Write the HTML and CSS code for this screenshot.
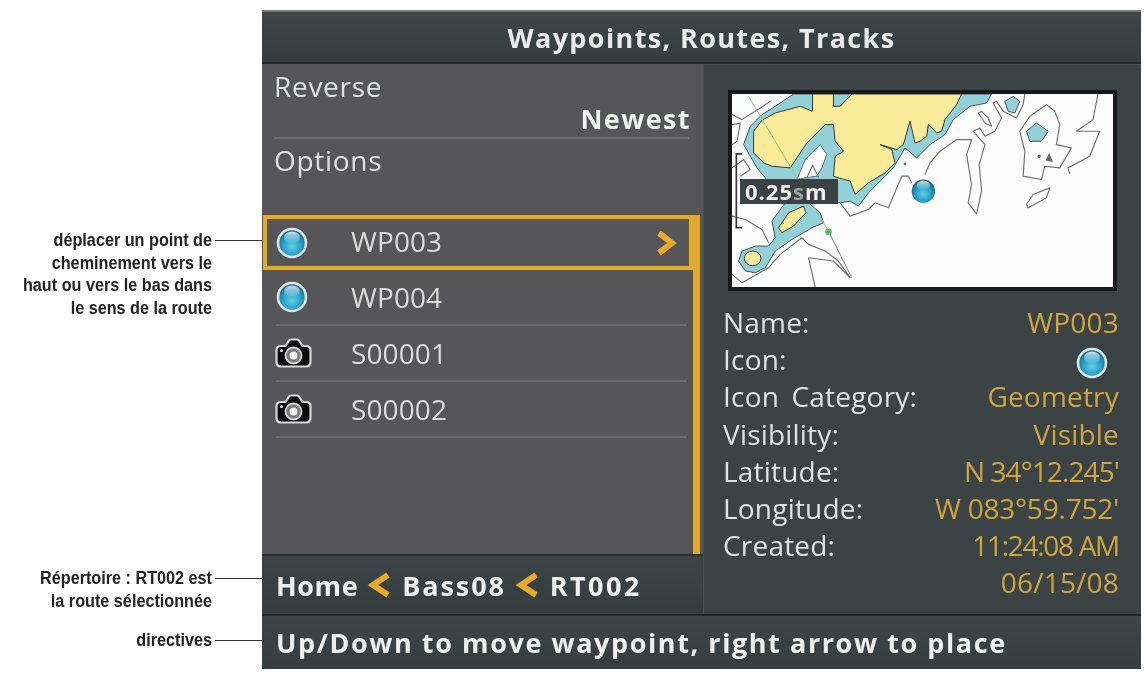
FILE: index.html
```html
<!DOCTYPE html>
<html lang="en">
<head>
<meta charset="utf-8">
<title>Waypoints, Routes, Tracks</title>
<link rel="stylesheet" href="styles.css">
</head>
<body>
<svg class="defs" width="0" height="0" aria-hidden="true">
  <defs>
    <radialGradient id="orb" cx="50%" cy="62%" r="60%">
      <stop offset="0" stop-color="#5fd0e8"/>
      <stop offset="0.55" stop-color="#2a9ec4"/>
      <stop offset="1" stop-color="#10607f"/>
    </radialGradient>
    <linearGradient id="gloss" x1="0" y1="0" x2="0" y2="1">
      <stop offset="0" stop-color="#dfeef2" stop-opacity=".9"/>
      <stop offset="1" stop-color="#dfeef2" stop-opacity="0"/>
    </linearGradient>
    <symbol id="orb-icon" viewBox="0 0 32 32">
      <circle cx="16" cy="16" r="14" fill="url(#orb)" stroke="#dce8ea" stroke-width="2.6"/>
      <ellipse cx="16" cy="10.5" rx="8" ry="6" fill="url(#gloss)"/>
    </symbol>
    <symbol id="camera-icon" viewBox="0 0 37 30">
      <path d="M6 8h4.500l3.500-5.500q.5-1 2-1h6q1.500 0 2 1L27.500 8H31q4.500 0 4.500 4v12q0 4.500-4.500 4.500H6q-4.500 0-4.500-4.500V12Q1.500 8 6 8z" fill="#0c0c0d" stroke="#d8d8d8" stroke-width="2.200" stroke-linejoin="round"/>
      <circle cx="18.500" cy="17.500" r="8" fill="#77777a" stroke="#d8d8d8" stroke-width="1.800"/>
      <circle cx="18.500" cy="17.500" r="4" fill="#f0f0f0"/>
      <circle cx="6.500" cy="12.500" r="1.500" fill="#e6e6e6"/>
    </symbol>
    <symbol id="chev-left" viewBox="0 0 28 28">
      <path d="M22 4 7 14l15 10" fill="none" stroke="#e6a92a" stroke-width="6"/>
    </symbol>
  </defs>
</svg>
<main class="page">
  <aside class="notes">
    <div class="note note-move">
      <p class="note-text">déplacer un point de<br>cheminement vers le<br>haut ou vers le bas dans<br>le sens de la route</p>
      <span class="leader"></span>
    </div>
    <div class="note note-dir">
      <p class="note-text">Répertoire : RT002 est<br>la route sélectionnée</p>
      <span class="leader"></span>
    </div>
    <div class="note note-hint">
      <p class="note-text">directives</p>
      <span class="leader"></span>
    </div>
  </aside>

  <section class="device">
    <header class="title">Waypoints, Routes, Tracks</header>
    <div class="middle">
      <div class="left">
        <div class="menu">
          <div class="menu-item menu-reverse">
            <span class="menu-label">Reverse</span>
            <span class="menu-value">Newest</span>
          </div>
          <div class="menu-item menu-options">
            <span class="menu-label">Options</span>
          </div>
        </div>
        <div class="list-wrap">
          <ul class="list">
            <li class="row row-selected">
              <svg class="row-icon orb"><use href="#orb-icon"/></svg>
              <span class="row-name">WP003</span>
              <svg class="row-chev" viewBox="0 0 24 28"><path d="M5 4 18 14 5 24" fill="none" stroke="#e6a92a" stroke-width="6"/></svg>
            </li>
            <li class="row">
              <svg class="row-icon orb"><use href="#orb-icon"/></svg>
              <span class="row-name">WP004</span>
            </li>
            <li class="row">
              <svg class="row-icon cam"><use href="#camera-icon"/></svg>
              <span class="row-name">S00001</span>
            </li>
            <li class="row">
              <svg class="row-icon cam"><use href="#camera-icon"/></svg>
              <span class="row-name">S00002</span>
            </li>
          </ul>
          <div class="scrollbar"></div>
        </div>
        <nav class="crumb">
          <span class="crumb-home">Home</span>
          <svg class="crumb-chev"><use href="#chev-left"/></svg>
          <span class="crumb-group">Bass08</span>
          <svg class="crumb-chev"><use href="#chev-left"/></svg>
          <span class="crumb-route">RT002</span>
        </nav>
      </div>

      <div class="right">
        <div class="map">
          <svg class="map-svg" viewBox="20 18 1145 580" preserveAspectRatio="none">
            <rect x="20" y="18" width="1145" height="580" fill="#fbfcfb"/>
            <path class="teal" d="M205 18 150 55 110 80 75 115 55 170 75 205 95 240 120 270 180 345 140 400 150 450 130 475 90 475 50 490 40 520 60 550 90 555 120 540 150 490 200 455 260 420 295 405 285 375 250 345 345 345 375 340 400 355 430 315 480 265 505 240 540 180 575 210 615 170 660 140 685 95 735 55 785 45 800 18z"/>
            <path class="patch" d="M285 170 305 200 290 240 275 265 240 270 215 275 240 215z"/>
            <path class="land" d="M85 130 110 97 150 75 225 55 262 70 262 18 325 18 325 55 345 55 380 18 710 18 695 50 660 95 650 130 635 135 610 110 605 145 585 160 570 165 555 100 535 170 515 185 465 170 500 185 510 225 480 255 430 285 390 320 375 280 340 270 325 265 330 205 355 190 330 160 325 110 300 110 245 165 195 240 140 235 115 225 85 195z"/>
            <path class="land" d="M160 420 190 375 235 355 242 375 205 415 170 435z"/>
            <ellipse class="land" cx="82" cy="512" rx="25" ry="22"/>
            <path class="teal" d="M840 40 865 25 885 40 870 75 850 70z"/>
            <path class="teal" d="M905 130 935 105 970 130 950 160 915 160z"/>
            <g class="contours">
              <path d="M600 260 615 225 645 190 695 155 740 155 725 200 740 290 730 345 755 378 770 310 763 230 780 170 745 130 765 120 780 145 810 130 830 90 805 45 815 40 835 70 875 90 895 50 900 18"/>
              <path d="M760 75 780 105 800 115 790 90 770 70z"/>
              <path d="M885 130 915 85 965 50 990 70 1005 110 995 170 1040 180 1005 240 960 235 950 275 895 265 900 190z"/>
              <path d="M1035 258 1030 240 1095 205 1125 130 1055 130 1105 95 1120 18"/>
              <path d="M905 350 925 320 975 300 965 330 910 360z"/>
              <path d="M20 80 50 95 105 60 135 40"/>
              <path d="M20 110 45 105 35 160 20 170"/>
              <path d="M20 240 55 215 75 245 45 265"/>
              <path d="M20 385 60 395 110 425 130 465"/>
              <path d="M20 560 50 585 130 540 165 500 230 450 250 470 300 490 340 520 375 570 325 520 250 510 270 598"/>
              <path d="M345 345 375 385 430 365 450 345 490 360 530 265 550 265 560 285"/>
              <path d="M245 270 262 232 280 268"/>
            </g>
            <circle class="speck" cx="943" cy="205" r="5"/>
            <path class="speck" d="M973 195 985 222 962 218z"/>
            <circle class="speck" cx="540" cy="228" r="4"/>
            <path class="track" d="M70 25 310 430"/>
            <path class="track-end" d="M310 430 380 570"/>
            <circle class="track-dot" cx="310" cy="432" r="10"/>
            <path class="bracket" d="M50 420H33V198H50"/>
            <circle cx="595" cy="310" r="35" fill="url(#orb)"/>
            <ellipse cx="595" cy="293" rx="20" ry="14" fill="url(#gloss)"/>
          </svg>
          <span class="scale">0.25<span class="scale-s">s</span>m</span>
        </div>
        <dl class="details">
          <dt>Name:</dt><dd>WP003</dd>
          <dt>Icon:</dt><dd><svg class="detail-orb"><use href="#orb-icon"/></svg></dd>
          <dt class="wide">Icon Category:</dt><dd>Geometry</dd>
          <dt>Visibility:</dt><dd>Visible</dd>
          <dt>Latitude:</dt><dd class="tight">N 34°12.245'</dd>
          <dt>Longitude:</dt><dd class="snug">W 083°59.752'</dd>
          <dt>Created:</dt><dd class="tighter">11:24:08 AM</dd>
          <dt></dt><dd>06/15/08</dd>
        </dl>
      </div>
    </div>
    <footer class="hint">Up/Down to move waypoint, right arrow to place</footer>
  </section>
</main>
</body>
</html>
```

FILE: styles.css
```css
* { box-sizing: border-box; }
html, body { margin: 0; padding: 0; background: #fff; }
body { width: 1148px; height: 673px; overflow: hidden; font-family: "Open Sans", "Noto Sans", sans-serif; }
.defs { position: absolute; }
.page { display: flex; align-items: flex-start; width: 1148px; height: 673px; }

.notes { width: 262px; flex: none; display: flex; flex-direction: column; padding-top: 229px; }
.note { display: flex; align-items: flex-start; }
.note-dir { margin-top: 248px; }
.note-hint { margin-top: 17px; }
.note-text { width: 212px; flex: none; margin: 0; text-align: right; white-space: nowrap; transform: scaleX(.9); transform-origin: right center; font-family: "Liberation Sans", sans-serif; font-weight: 700; font-size: 18px; line-height: 22.500px; color: #222; }
.leader { flex: 1; height: 1px; margin: 11px 0 0 3px; background: #333; }

.device { width: 879px; height: 659px; margin-top: 10px; flex: none; display: flex; flex-direction: column; background: #2c3234; border-top: 2px solid #77797a; color: #e9ecea; filter: blur(.35px); }
.title { height: 52px; flex: none; display: flex; align-items: center; justify-content: center; background: linear-gradient(#3e4648, #363d3f); border-bottom: 2px solid #24282a; font-weight: 700; font-size: 27px; letter-spacing: 1.370px; }

.middle { flex: 1; display: flex; min-height: 0; }
.left { width: 441px; flex: none; display: flex; flex-direction: column; }
.right { flex: 1; display: flex; flex-direction: column; background: #3b4345; padding: 25px 0 0 24px; border-top: 1px solid #4a5052; border-left: 1px solid #4a5052; }

.menu { height: 151px; flex: none; background: #565557; border-bottom: 1px solid #6a4a3a; padding: 4px 14px 0 12px; }
.menu-item { display: flex; flex-direction: column; font-size: 28px; color: #dfe2e0; }
.menu-reverse { height: 71px; border-bottom: 2px solid #6c6c6e; }
.menu-label { line-height: 36px; letter-spacing: .7px; }
.menu-value { align-self: flex-end; margin-top: -3px; margin-right: -2px; font-size: 27px; line-height: 36px; font-weight: 700; letter-spacing: 1.400px; color: #f0f2f0; }
.menu-options { padding-top: 3px; }

.list-wrap { flex: 1; display: flex; background: #565557; min-height: 0; }
.list { flex: 1; list-style: none; margin: 0; padding: 0; }
.scrollbar { width: 7px; flex: none; margin-right: 3px; background: #e0a92f; }
.row { height: 56px; display: flex; align-items: center; margin: 0 6px 0 14px; border-bottom: 2px solid #6c6c6e; font-size: 28px; color: #dbdcda; }
.row-selected { height: 55px; margin: 0 0 0 1px; padding: 0 16px 0 13px; border: 4px solid #e0a92f; outline: 1px solid #6f5a2a; outline-offset: -5px; }
.row-selected .row-name { margin-top: -3px; }
.row-icon { width: 32px; height: 32px; flex: none; }
.row-selected .row-icon { margin-left: -4px; }
.row .row-icon { margin-right: 43px; }
.row .cam { width: 37px; height: 30px; margin-right: 39px; margin-left: -1px; }
.row-name { flex: 1; letter-spacing: .1px; }
.row-chev { width: 24px; height: 28px; flex: none; margin-right: -5px; }

.crumb { height: 60px; flex: none; display: flex; align-items: center; padding-left: 14px; gap: 8px; background: linear-gradient(#3c4446, #363d3f); border-top: 2px solid #2a2e30; font-weight: 700; font-size: 27px; color: #eef0ee; }
.crumb-home { letter-spacing: .6px; }
.crumb-group { letter-spacing: 1.900px; }
.crumb-route { letter-spacing: 2.400px; }
.crumb-chev { width: 28px; height: 28px; flex: none; }

.map { position: relative; width: 389px; height: 201px; flex: none; border: 4px solid #15191a; background: #fbfcfb; }
.map-svg { display: block; width: 100%; height: 100%; }
.teal { fill: #93d0d8; stroke: #3f5254; stroke-width: 3; stroke-linejoin: round; }
.patch { fill: #fbfcfb; stroke: #3f5254; stroke-width: 2.500; }
.land { fill: #faeb9b; stroke: #2f3a36; stroke-width: 3; stroke-linejoin: round; }
.contours path { fill: none; stroke: #707070; stroke-width: 3.500; stroke-linejoin: round; }
.speck { fill: #666; }
.track { fill: none; stroke: #98c276; stroke-width: 3; }
.track-end { fill: none; stroke: #666; stroke-width: 2.500; }
.track-dot { fill: #5cb85c; }
.bracket { fill: none; stroke: #333; stroke-width: 5; }
.scale { position: absolute; left: 8px; top: 85px; width: 98px; height: 25px; padding-left: 5px; background: #3a4244; white-space: nowrap; font-weight: 700; font-size: 22px; line-height: 25px; letter-spacing: 1px; color: #eef0ee; }
.scale-s { opacity: .55; }

.details { display: grid; grid-template-columns: auto 1fr; grid-auto-rows: 37.200px; margin: 13px 22px 0 -5px; font-size: 28px; line-height: 37.200px; }
.details dt { color: #dfe3e1; letter-spacing: .2px; }
.details .wide { word-spacing: 5px; }
.details dd { margin: 0; text-align: right; color: #cfa63e; letter-spacing: .2px; white-space: nowrap; }
.details .tight { letter-spacing: -.9px; }
.details .snug { letter-spacing: -.2px; }
.details .tighter { letter-spacing: -1.300px; }
.detail-orb { width: 32px; height: 32px; vertical-align: middle; margin-right: 11px; }

.hint { height: 55px; flex: none; display: flex; align-items: center; padding-left: 14px; background: linear-gradient(#3e4648, #363d3f); border-top: 2px solid #23272a; font-weight: 700; font-size: 27px; letter-spacing: 1.580px; color: #eef0ee; }
```
